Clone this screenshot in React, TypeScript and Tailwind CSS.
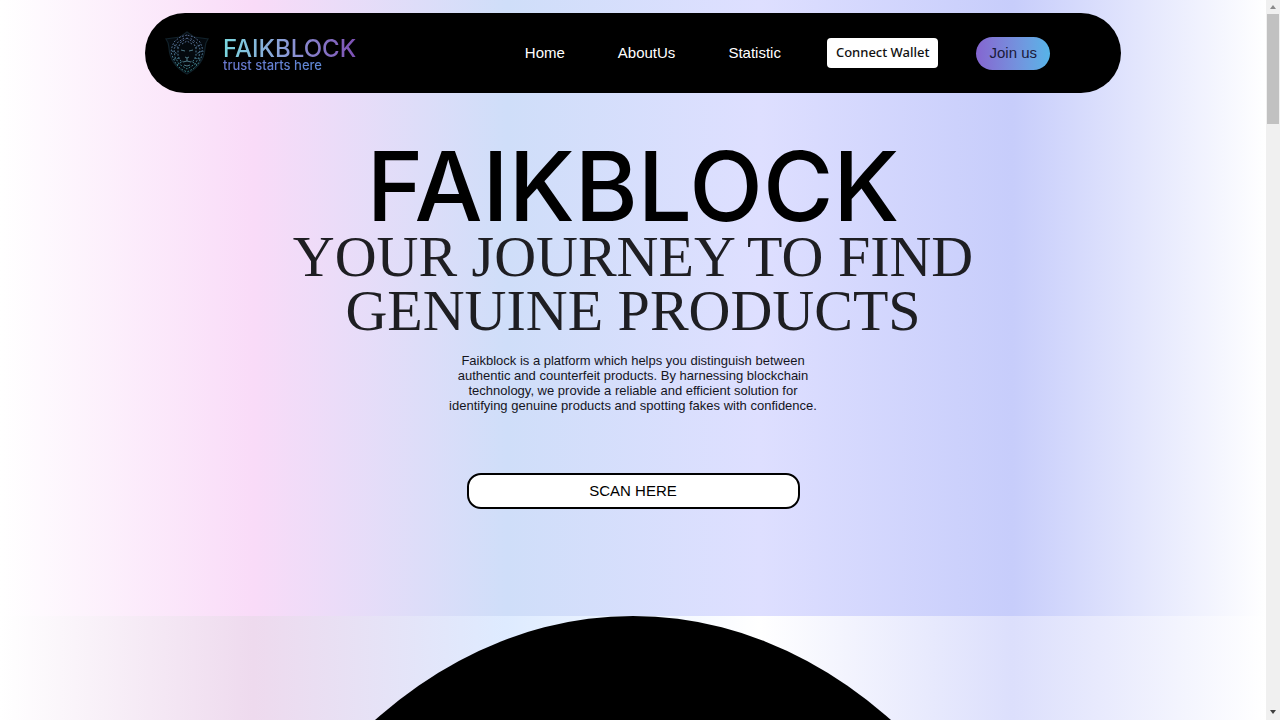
import React from "react";

const links = [
  { label: "Home", href: "#home" },
  { label: "AboutUs", href: "#about" },
  { label: "Statistic", href: "#statistic" },
];

function LionShield() {
  return (
    <svg viewBox="0 0 44 44" className="h-11 w-11 shrink-0" fill="none" aria-hidden="true">
      <defs>
        <linearGradient id="mane" x1="0" y1="4" x2="0" y2="42" gradientUnits="userSpaceOnUse">
          <stop offset="0" stopColor="#7181b4" />
          <stop offset="0.5" stopColor="#5f93b4" />
          <stop offset="1" stopColor="#399a94" />
        </linearGradient>
      </defs>
      <path
        d="M22 1 L29 6 L43 8 Q40 12 40 17 Q39 34 22 43 Q5 34 4 17 Q4 12 1 8 L15 6 Z"
        fill="#04090e"
        stroke="#11212a"
        strokeWidth="1.2"
      />
      <g stroke="url(#mane)" strokeWidth="1" strokeDasharray="1.8 1.5" opacity="0.8">
        <path d="M22 4 L15 6 L9 11 L7 16 L6 21 L8 27 L11 33 L16 38 L22 41 L28 38 L33 33 L36 27 L38 21 L37 16 L35 11 L29 6 Z" />
        <path d="M19 7 L12 12 L9 18 L10 26 L14 33 L22 38 L30 33 L34 26 L35 18 L32 12 L25 7" />
        <path d="M22 7 L16 11 L13 17 L13 25 L17 32 M22 7 L28 11 L31 17 L31 25 L27 32" />
        <path d="M9 14 L14 17 M7 20 L13 23 M9 28 L15 27 M35 14 L30 17 M37 20 L31 23 M35 28 L29 27" />
        <path d="M17 13 L22 10 L27 13 M12 34 L18 30 M32 34 L26 30" />
      </g>
      <g stroke="#6ba3b5" strokeWidth="0.8" opacity="0.9">
        <path d="M16 19 L20 20 M28 19 L24 20" />
        <path d="M20 26 L22 27 L24 26 M22 27 V30 M18 31 L22 30 L26 31" />
        <path d="M19 34 L22 35 L25 34" />
      </g>
    </svg>
  );
}

function Brand() {
  return (
    <a href="#home" className="flex items-center gap-[14px]">
      <LionShield />
      <span className="flex flex-col pt-1 text-left font-['Inter',sans-serif]">
        <span className="bg-linear-to-r from-[#79d8df] via-[#8b97d6] to-[#7d4fb4] bg-clip-text text-[24px] leading-[20px] font-medium text-transparent">
          FAIKBLOCK
        </span>
        <span className="bg-linear-to-r from-[#6a78cf] to-[#5b8fd8] bg-clip-text text-[13px] leading-[12px] font-medium text-transparent">
          trust starts here
        </span>
      </span>
    </a>
  );
}

function Navbar() {
  return (
    <header className="mx-auto flex h-20 w-full max-w-[976px] items-center justify-between rounded-full bg-black pr-[71px] pl-5">
      <Brand />
      <nav className="flex items-center text-[15px] text-white">
        <div className="flex gap-[53px]">
          {links.map((link) => (
            <a key={link.label} href={link.href}>
              {link.label}
            </a>
          ))}
        </div>
        <button
          type="button"
          className="ml-[46px] h-[30px] rounded-[4px] bg-white px-[9px] font-['Noto_Sans',sans-serif] text-[13px] font-medium whitespace-nowrap text-[#111]"
        >
          Connect Wallet
        </button>
        <button
          type="button"
          className="ml-[38px] h-[33px] rounded-full bg-linear-to-r from-[#8465d0] to-[#55b4e8] px-[13px] whitespace-nowrap text-[#1a1a3a]"
        >
          Join us
        </button>
      </nav>
    </header>
  );
}

function Hero() {
  return (
    <section className="flex flex-col items-center bg-[linear-gradient(90deg,#ffffff_0%,#f9dbf8_20%,#cfdef9_40%,#dedfff_60%,#c7cdfb_80%,#ffffff_100%)] pb-[107px] text-center">
      <div className="w-full pt-[13px]">
        <Navbar />
      </div>
      <h1 className="mt-[58px] font-['Inter',sans-serif] text-[96px] leading-[70px] font-medium text-black">
        FAIKBLOCK
      </h1>
      <h2 className="mt-[9px] max-w-[720px] font-['Liberation_Serif',serif] text-[58px] leading-[54px] text-[#1e1e22]">
        YOUR JOURNEY TO FIND GENUINE PRODUCTS
      </h2>
      <p className="mt-[15px] max-w-[384px] text-[13px] leading-[15px] text-[#15151d]">
        Faikblock is a platform which helps you distinguish between authentic and counterfeit
        products. By harnessing blockchain technology, we provide a reliable and efficient solution
        for identifying genuine products and spotting fakes with confidence.
      </p>
      <button
        type="button"
        className="mt-[60px] h-9 w-[333px] rounded-[14px] border-2 border-black bg-white text-[15px] text-black"
      >
        SCAN HERE
      </button>
    </section>
  );
}

function Dome() {
  return (
    <section className="flex min-h-0 flex-1 justify-center overflow-hidden bg-[linear-gradient(90deg,#ffffff_0%,#eedaee_20%,#deebff_40%,#ffffff_60%,#dcdffc_80%,#ffffff_100%)]">
      <div className="h-[1180px] w-[910px] shrink-0 rounded-[50%] bg-black" />
    </section>
  );
}

function ScrollTrack() {
  return (
    <div className="flex w-[14px] shrink-0 flex-col items-center bg-[#f0f0f0]" aria-hidden="true">
      <div className="flex h-[14px] items-center">
        <svg viewBox="0 0 6 4" className="h-1 w-1.5" fill="#8a8a8a">
          <path d="M3 0 L6 4 H0 Z" />
        </svg>
      </div>
      <div className="h-[110px] w-3 bg-[#c1c1c1]" />
      <div className="mt-auto flex h-4 items-center">
        <svg viewBox="0 0 6 4" className="h-1 w-1.5" fill="#404040">
          <path d="M0 0 H6 L3 4 Z" />
        </svg>
      </div>
    </div>
  );
}

export default function App() {
  return (
    <div className="flex h-screen overflow-hidden font-['Liberation_Sans',Arial,sans-serif]">
      <main className="flex min-w-0 flex-1 flex-col">
        <Hero />
        <Dome />
      </main>
      <ScrollTrack />
    </div>
  );
}
